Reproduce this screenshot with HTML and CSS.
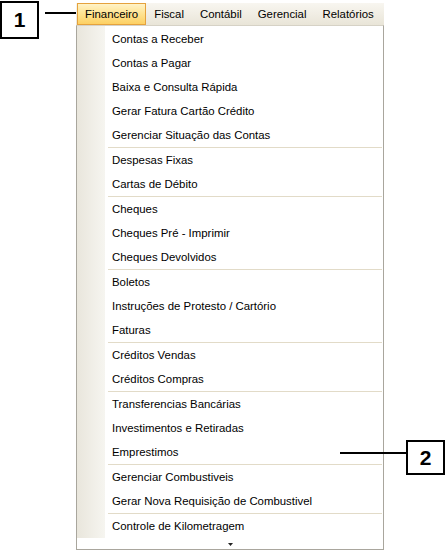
FILE: index.html
```html
<!DOCTYPE html>
<html lang="pt-BR">
<head>
<meta charset="utf-8">
<title>Menu Financeiro</title>
<link rel="stylesheet" href="styles.css">
</head>
<body>
<div class="page">
  <div class="callout-1">
    <div class="tag">1</div>
    <div class="leader"></div>
  </div>
  <div class="menu">
    <nav class="menubar">
      <span class="mi active">Financeiro</span>
      <span class="mi">Fiscal</span>
      <span class="mi">Contábil</span>
      <span class="mi">Gerencial</span>
      <span class="mi">Relatórios</span>
    </nav>
    <div class="dropdown">
      <ul class="items">
        <li class="item">Contas a Receber</li>
        <li class="item">Contas a Pagar</li>
        <li class="item">Baixa e Consulta Rápida</li>
        <li class="item">Gerar Fatura Cartão Crédito</li>
        <li class="item">Gerenciar Situação das Contas</li>
        <li class="sep"></li>
        <li class="item">Despesas Fixas</li>
        <li class="item">Cartas de Débito</li>
        <li class="sep"></li>
        <li class="item">Cheques</li>
        <li class="item">Cheques Pré - Imprimir</li>
        <li class="item">Cheques Devolvidos</li>
        <li class="sep"></li>
        <li class="item">Boletos</li>
        <li class="item">Instruções de Protesto / Cartório</li>
        <li class="item">Faturas</li>
        <li class="sep"></li>
        <li class="item">Créditos Vendas</li>
        <li class="item">Créditos Compras</li>
        <li class="sep"></li>
        <li class="item">Transferencias Bancárias</li>
        <li class="item">Investimentos e Retiradas</li>
        <li class="item">Emprestimos</li>
        <li class="sep"></li>
        <li class="item">Gerenciar Combustiveis</li>
        <li class="item">Gerar Nova Requisição de Combustivel</li>
        <li class="sep"></li>
        <li class="item">Controle de Kilometragem</li>
      </ul>
      <div class="more">
        <svg width="5" height="3" viewBox="0 0 5 3"><polygon points="0,0 5,0 2.5,3" fill="#222"/></svg>
      </div>
    </div>
  </div>
  <div class="callout-2">
    <div class="leader"></div>
    <div class="tag">2</div>
  </div>
</div>
</body>
</html>
```
FILE: styles.css
```css
html, body {
  margin: 0;
  padding: 0;
  background: #fff;
}

.page {
  position: relative;
  display: flex;
  align-items: flex-start;
  width: 445px;
  height: 551px;
  font-family: "Liberation Sans", Arial, sans-serif;
  font-size: 11.4px;
  color: #000;
}

.tag {
  box-sizing: border-box;
  width: 39px;
  height: 38px;
  border: 2px solid #000;
  background: #fff;
  display: flex;
  align-items: center;
  justify-content: center;
  font-family: "Liberation Sans", Arial, sans-serif;
  font-weight: bold;
  font-size: 21px;
}

.leader {
  height: 2px;
  background: #000;
}

.callout-1 {
  display: flex;
  align-items: flex-start;
}

.callout-1 .tag {
  margin-top: 1px;
}

.callout-1 .leader {
  width: 31px;
  margin-top: 12px;
  margin-left: 6px;
}

.callout-2 {
  position: absolute;
  left: 340px;
  top: 440px;
  display: flex;
  align-items: flex-start;
}

.callout-2 .leader {
  width: 66px;
  margin-top: 12px;
}

.callout-2 .tag {
  height: 35px;
}

.menu {
  width: 308px;
  margin-top: 3px;
}

.menubar {
  display: flex;
  height: 22px;
  padding-left: 1px;
  background: linear-gradient(#f8f6f0, #e9e5d8);
}

.mi {
  box-sizing: border-box;
  height: 22px;
  padding: 0 7px;
  border: 1px solid transparent;
  line-height: 20px;
  white-space: nowrap;
}

.mi.active {
  border-color: #e5a23d;
  background: linear-gradient(#fff3c8 0%, #ffe494 45%, #fdd063 100%);
}

.dropdown {
  border: 1px solid #a9a69d;
  border-top-color: #d6d2c6;
  background: #fff;
}

.items {
  list-style: none;
  margin: 0;
  padding: 1px 0 0;
  background: linear-gradient(to right, #e9e6dc, #f6f5f0) 0 0 / 28px 100% no-repeat;
}

.item {
  height: 24px;
  line-height: 24px;
  padding-left: 35px;
  white-space: nowrap;
}

.sep {
  height: 1px;
  margin: 0 1px 0 31px;
  background: #e2dbc8;
}

.more {
  height: 11px;
  display: flex;
  justify-content: center;
  align-items: center;
}

.more svg {
  display: block;
  margin-top: 2px;
}
```
